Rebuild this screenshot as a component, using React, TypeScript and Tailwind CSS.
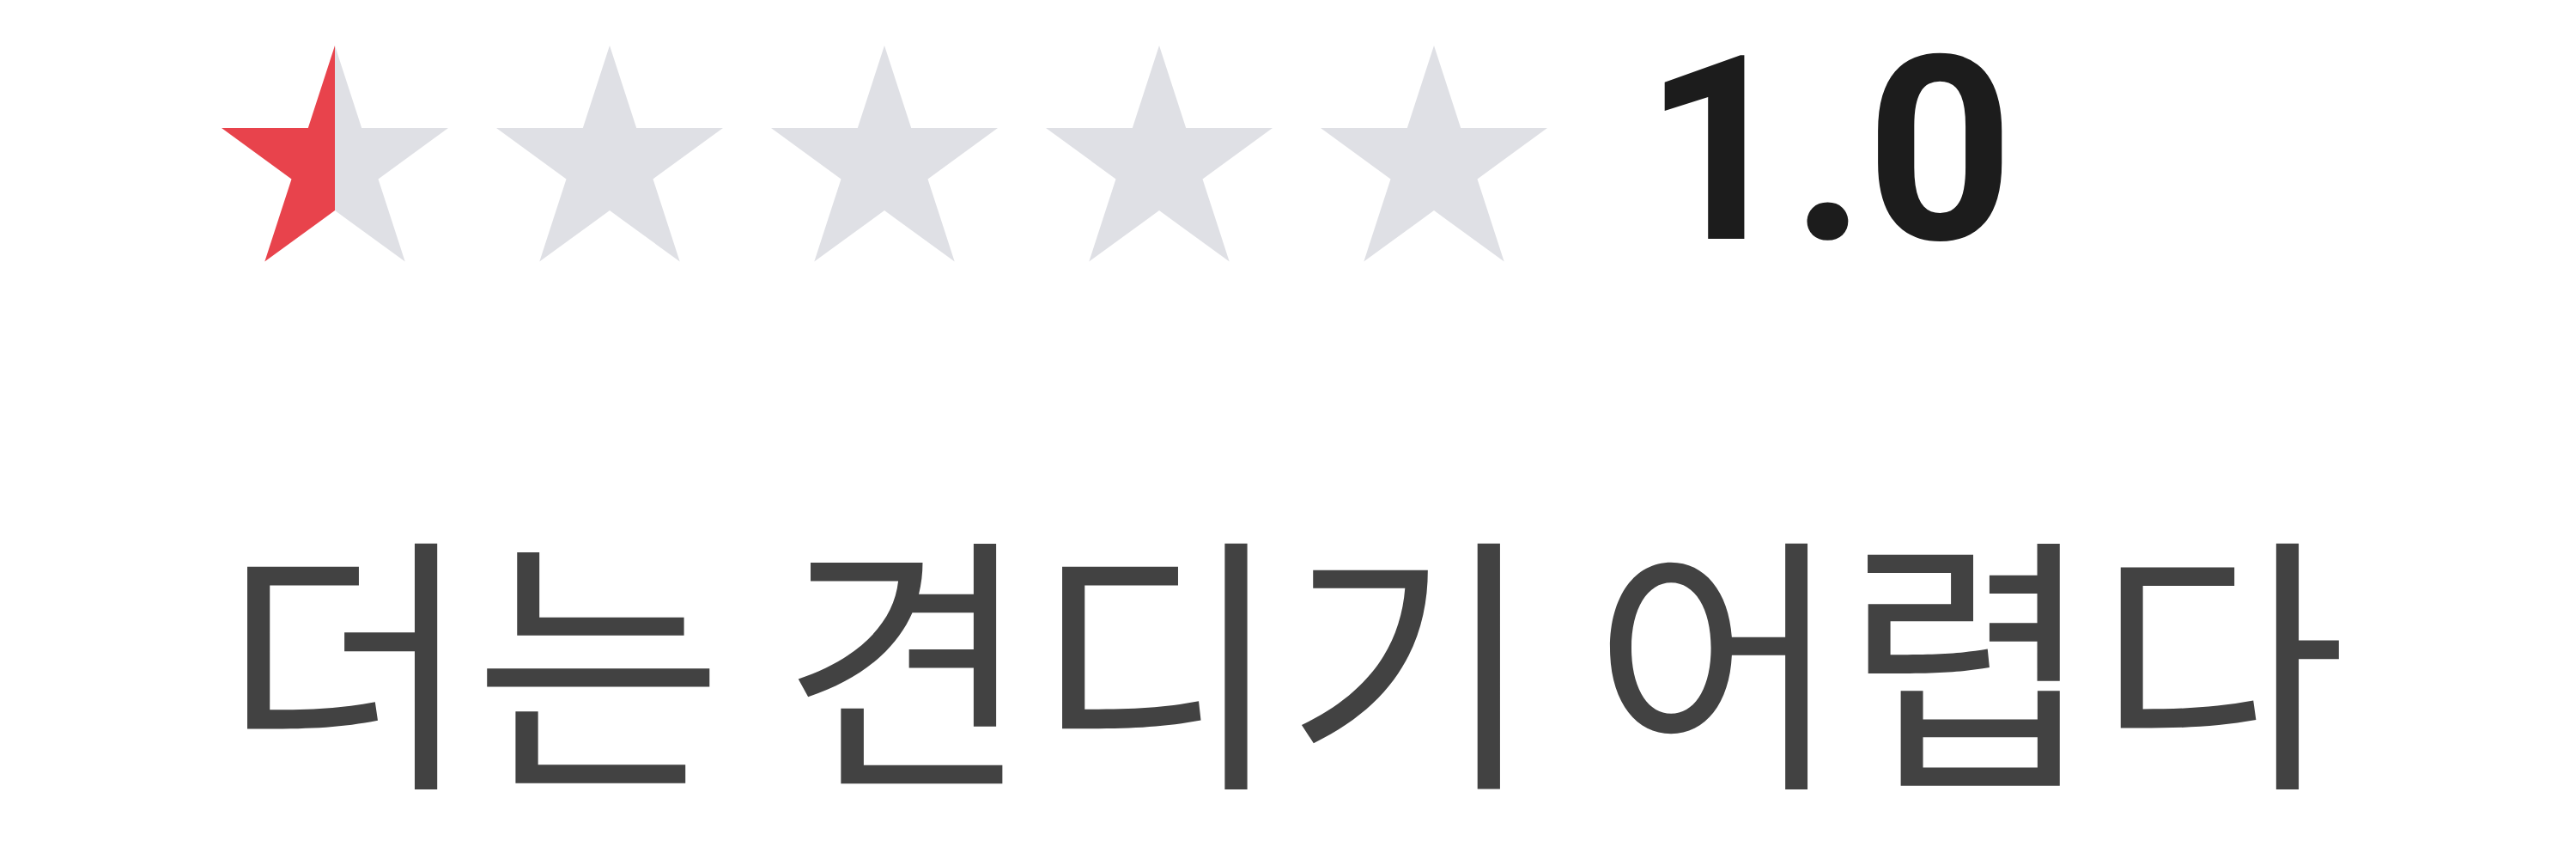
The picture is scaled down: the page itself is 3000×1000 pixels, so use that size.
import React from 'react';

// pentagram, outer radius 139, inner radius 53
const STAR_PATH =
  'M132 0L163.2 96L264 96L182.5 155.4L213.7 251.5L132 192.1L50.3 251.5L81.5 155.4L0 96L100.8 96Z';

function Star({ fill, id }: { fill: number; id: string }) {
  const stop = `${fill * 100}%`;
  return (
    <svg viewBox="0 0 264 252" className="h-[252px] w-[264px] shrink-0">
      <defs>
        <linearGradient id={id} x1="0" x2="1" y1="0" y2="0">
          <stop offset={stop} stopColor="#e8434c" />
          <stop offset={stop} stopColor="#dfe0e5" />
        </linearGradient>
      </defs>
      <path d={STAR_PATH} fill={`url(#${id})`} />
    </svg>
  );
}

const fills = [0.5, 0, 0, 0, 0];

export default function App() {
  return (
    <div className="h-[1000px] w-[3000px] overflow-hidden bg-white pl-[258px]">
      <div className="flex items-start">
        <div className="mt-[53px] flex gap-[56px]">
          {fills.map((f, i) => (
            <Star key={i} fill={f} id={`star-${i}`} />
          ))}
        </div>
        <span className="ml-[112px] font-['Roboto',sans-serif] text-[300px] leading-[normal] font-bold text-[#1c1c1c]">
          1.0
        </span>
      </div>
      <p className="mt-[176px] font-['Noto_Sans_CJK_KR',sans-serif] text-[316px] leading-[normal] tracking-[3px] text-[#424242] [word-spacing:-10px]">
        더는 견디기 어렵다
      </p>
    </div>
  );
}
